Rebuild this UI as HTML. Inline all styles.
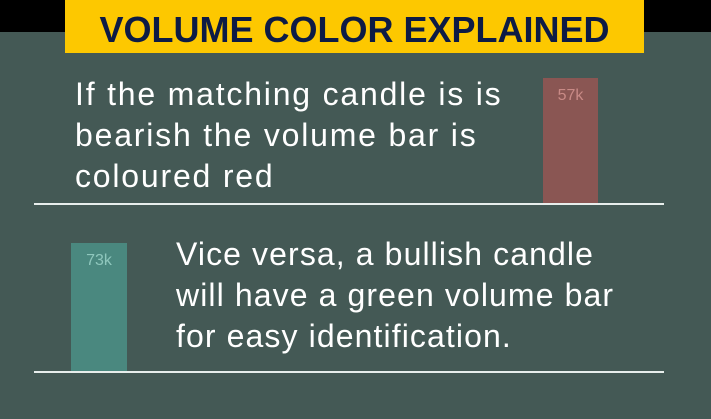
<!DOCTYPE html><html><head><style>
body{margin:0;width:711px;height:419px;background:#445955;position:relative;overflow:hidden;font-family:"Liberation Sans",sans-serif}
.top{position:absolute;left:0;top:0;width:711px;height:32px;background:#000}
.y{position:absolute;left:65px;top:0;width:579px;height:53px;background:#fdc800;color:#0d1b45;font-weight:bold;font-size:36px;text-align:center;line-height:60px;letter-spacing:0px}
.t{position:absolute;color:#fff;font-size:32px;line-height:41px;letter-spacing:1.8px;white-space:nowrap}
.bar{position:absolute;font-size:16px;text-align:center;padding-top:9px;box-sizing:border-box}
.l{position:absolute;left:34px;width:630px;height:2px;background:#e8eeec}
</style></head><body>
<div class="top"></div>
<div class="y">VOLUME COLOR EXPLAINED</div>
<div class="bar" style="left:543px;top:78px;width:55px;height:126px;background:#8a5653;color:#c98a86">57k</div>
<div class="t" style="left:75px;top:74px">If the matching candle is is<br>bearish the volume bar is<br>coloured red</div>
<div class="l" style="top:203px"></div>
<div class="bar" style="left:71px;top:243px;width:56px;height:129px;background:#4a887f;color:#8fc7bd">73k</div>
<div class="t" style="left:176px;top:234px;letter-spacing:1.1px">Vice versa, a bullish candle<br>will have a green volume bar<br>for easy identification.</div>
<div class="l" style="top:371px"></div>
</body></html>
